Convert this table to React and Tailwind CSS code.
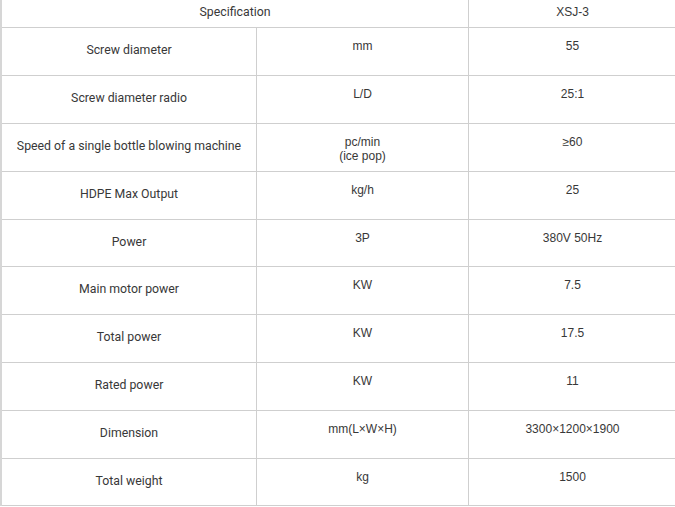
const rows = [
  ['Screw diameter', ['mm'], '55'],
  ['Screw diameter radio', ['L/D'], '25:1'],
  ['Speed of a single bottle blowing machine', ['pc/min', '(ice pop)'], '≥60'],
  ['HDPE Max Output', ['kg/h'], '25'],
  ['Power', ['3P'], '380V 50Hz'],
  ['Main motor power', ['KW'], '7.5'],
  ['Total power', ['KW'], '17.5'],
  ['Rated power', ['KW'], '11'],
  ['Dimension', ['mm(L×W×H)'], '3300×1200×1900'],
  ['Total weight', ['kg'], '1500'],
];

const heights = ['h-[48px]', 'h-[48px]', 'h-[48px]', 'h-[48px]', 'h-[47px]', 'h-[48px]', 'h-[48px]', 'h-[48px]', 'h-[48px]', 'h-[47px]'];

export default function App() {
  return (
    <div className="w-[675px] h-[507px] bg-white overflow-hidden text-[#383838]">
      <div className="w-[700px] border-l-2 border-[#d6d6d6]">
        <div className="flex h-[28px] border-b border-[#cfcfcf]">
          <div className="w-[467px] shrink-0 border-r border-[#cfcfcf] pt-[5px] text-center text-[12.3px] leading-[14px] font-['Roboto',sans-serif]">
            Specification
          </div>
          <div className="w-[207px] shrink-0 pt-[5px] text-center text-[12px] leading-[14px] font-['Liberation_Sans',Arial,sans-serif]">
            XSJ-3
          </div>
        </div>
        {rows.map(([name, unit, value], i) => (
          <div key={name} className={`flex border-b border-[#cfcfcf] ${heights[i]}`}>
            <div className="w-[255px] shrink-0 border-r border-[#cfcfcf] pt-[15px] text-center text-[12.3px] leading-[14px] font-['Roboto',sans-serif]">
              {name}
            </div>
            <div className="w-[212px] shrink-0 border-r border-[#cfcfcf] pt-[11px] text-center text-[12px] leading-[14px] font-['Liberation_Sans',Arial,sans-serif]">
              {unit.map((u) => (
                <div key={u}>{u}</div>
              ))}
            </div>
            <div className="w-[207px] shrink-0 pt-[11px] text-center text-[12px] leading-[14px] font-['Liberation_Sans',Arial,sans-serif]">
              {value}
            </div>
          </div>
        ))}
      </div>
    </div>
  );
}
